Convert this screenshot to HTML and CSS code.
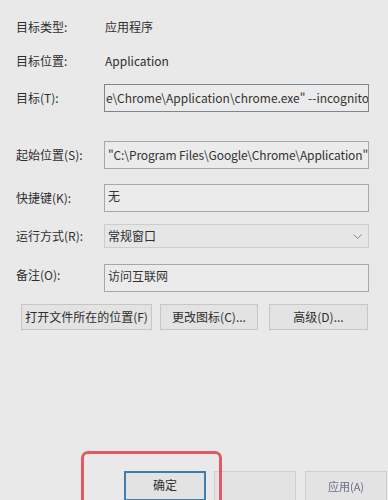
FILE: index.html
```html
<!DOCTYPE html>
<html lang="zh-CN">
<head>
<meta charset="utf-8">
<link rel="stylesheet" href="styles.css">
</head>
<body>
<div class="dialog">
  <div class="sep sep-top"></div>
  <div class="group group-info">
    <div class="row row-text"><span class="label">目标类型:</span><span class="value">应用程序</span></div>
    <div class="row row-text"><span class="label">目标位置:</span><span class="value">Application</span></div>
    <div class="row row-box"><span class="label">目标(T):</span><div class="box box-focus">e\Chrome\Application\chrome.exe" --incognito</div></div>
  </div>
  <div class="sep sep-mid"></div>
  <div class="group group-fields">
    <div class="row row-box"><span class="label">起始位置(S):</span><div class="box box-tight">"C:\Program Files\Google\Chrome\Application"</div></div>
    <div class="row row-box"><span class="label">快捷键(K):</span><div class="box box-top">无</div></div>
    <div class="row row-select"><span class="label">运行方式(R):</span><div class="select"><span>常规窗口</span><svg class="chev" width="9" height="6" viewBox="0 0 9 6"><path d="M0.5 0.5 L4.5 4.5 L8.5 0.5" fill="none" stroke="#8a8a8a" stroke-width="1"/></svg></div></div>
    <div class="row row-box"><span class="label label-note">备注(O):</span><div class="box box-top">访问互联网</div></div>
  </div>
  <div class="actions">
    <button class="btn btn-wide">打开文件所在的位置(F)</button>
    <button class="btn btn-mid">更改图标(C)...</button>
    <button class="btn btn-mid2">高级(D)...</button>
  </div>
  <div class="footer">
    <div class="highlight"></div>
    <button class="fbtn fbtn-default">确定</button>
    <button class="fbtn"></button>
    <button class="fbtn fbtn-faded">应用(A)</button>
  </div>
</div>
</body>
</html>
```

FILE: styles.css
```css
html, body {
  margin: 0;
  padding: 0;
  background: #e9e9e9;
  height: 500px;
  overflow: hidden;
}
body {
  font-family: "Noto Sans CJK SC", "Noto Sans", sans-serif;
  font-size: 12px;
  color: #2e2e2e;
}
.dialog {
  width: 388px;
  height: 500px;
  display: flex;
  flex-direction: column;
}
.sep {
  height: 1px;
  background: #c3c7cf;
  margin-left: 16px;
  width: 351px;
}
.sep-top { margin-top: 2px; }
.group {
  margin-left: 16px;
  width: 353px;
  display: flex;
  flex-direction: column;
}
.group-info {
  margin-top: 15px;
  gap: 14px;
}
.sep-mid { margin-top: 12px; }
.group-fields {
  margin-top: 17px;
  gap: 15px;
}
.row {
  display: grid;
  grid-template-columns: 88px 1fr;
  align-items: center;
}
.row-text { height: 20px; }
.row-box { height: 28px; }
.group-info .row-box { margin-top: -1px; }
.row-select { height: 24px; margin-top: -3px; }
.group-fields .row-box:last-child { margin-top: 1px; }
.label, .value {
  line-height: 20px;
  white-space: nowrap;
}
.value { padding-left: 1px; }
.label-note { margin-top: -6px; }
.box {
  box-sizing: border-box;
  height: 28px;
  border: 1px solid #a7a7a7;
  background: #ebebeb;
  padding: 0 0 0 3px;
  line-height: 26px;
  white-space: nowrap;
  overflow: hidden;
  color: #333;
}
.box-tight { letter-spacing: -0.12px; }
.box-focus {
  border-color: #7b8794;
  padding-left: 1px;
}
.box-top {
  line-height: 20px;
  padding-top: 1px;
}
.select {
  box-sizing: border-box;
  height: 24px;
  border: 1px solid #cdcdcd;
  background: #e6e6e6;
  padding: 0 6px 0 3px;
  display: flex;
  align-items: center;
  justify-content: space-between;
  line-height: 20px;
}
.chev { margin-top: 1px; }
.actions {
  margin-top: 12px;
  margin-left: 21px;
  display: flex;
  gap: 8px;
}
.btn {
  font-family: inherit;
  font-size: 12px;
  color: #2e2e2e;
  height: 26px;
  padding: 0;
  background: #e3e3e3;
  border: 1px solid #c6c6c6;
  border-radius: 0;
  line-height: 20px;
}
.btn-wide { width: 131px; }
.btn-mid { width: 98px; }
.btn-mid2 { width: 99px; margin-left: 3px; }
.footer {
  position: relative;
  flex: 1;
  display: flex;
  align-items: flex-start;
  padding-top: 141px;
  padding-left: 124px;
  gap: 8px;
}
.highlight {
  position: absolute;
  left: 81px;
  top: 121px;
  width: 135px;
  height: 60px;
  border: 3px solid #e35864;
  border-radius: 7px;
}
.fbtn {
  font-family: inherit;
  font-size: 12px;
  color: #2e2e2e;
  width: 82px;
  height: 30px;
  padding: 0 0 4px 0;
  background: #e3e3e3;
  border: 1px solid #cfcfcf;
  border-radius: 0;
  line-height: 20px;
  flex: none;
}
.fbtn-default {
  border: 2px solid #3d7db3;
  padding-bottom: 2px;
}
.fbtn-faded {
  margin-left: 1px;
  color: #6a6f86;
  font-size: 11px;
  padding-bottom: 0;
  filter: blur(0.5px);
}
```
